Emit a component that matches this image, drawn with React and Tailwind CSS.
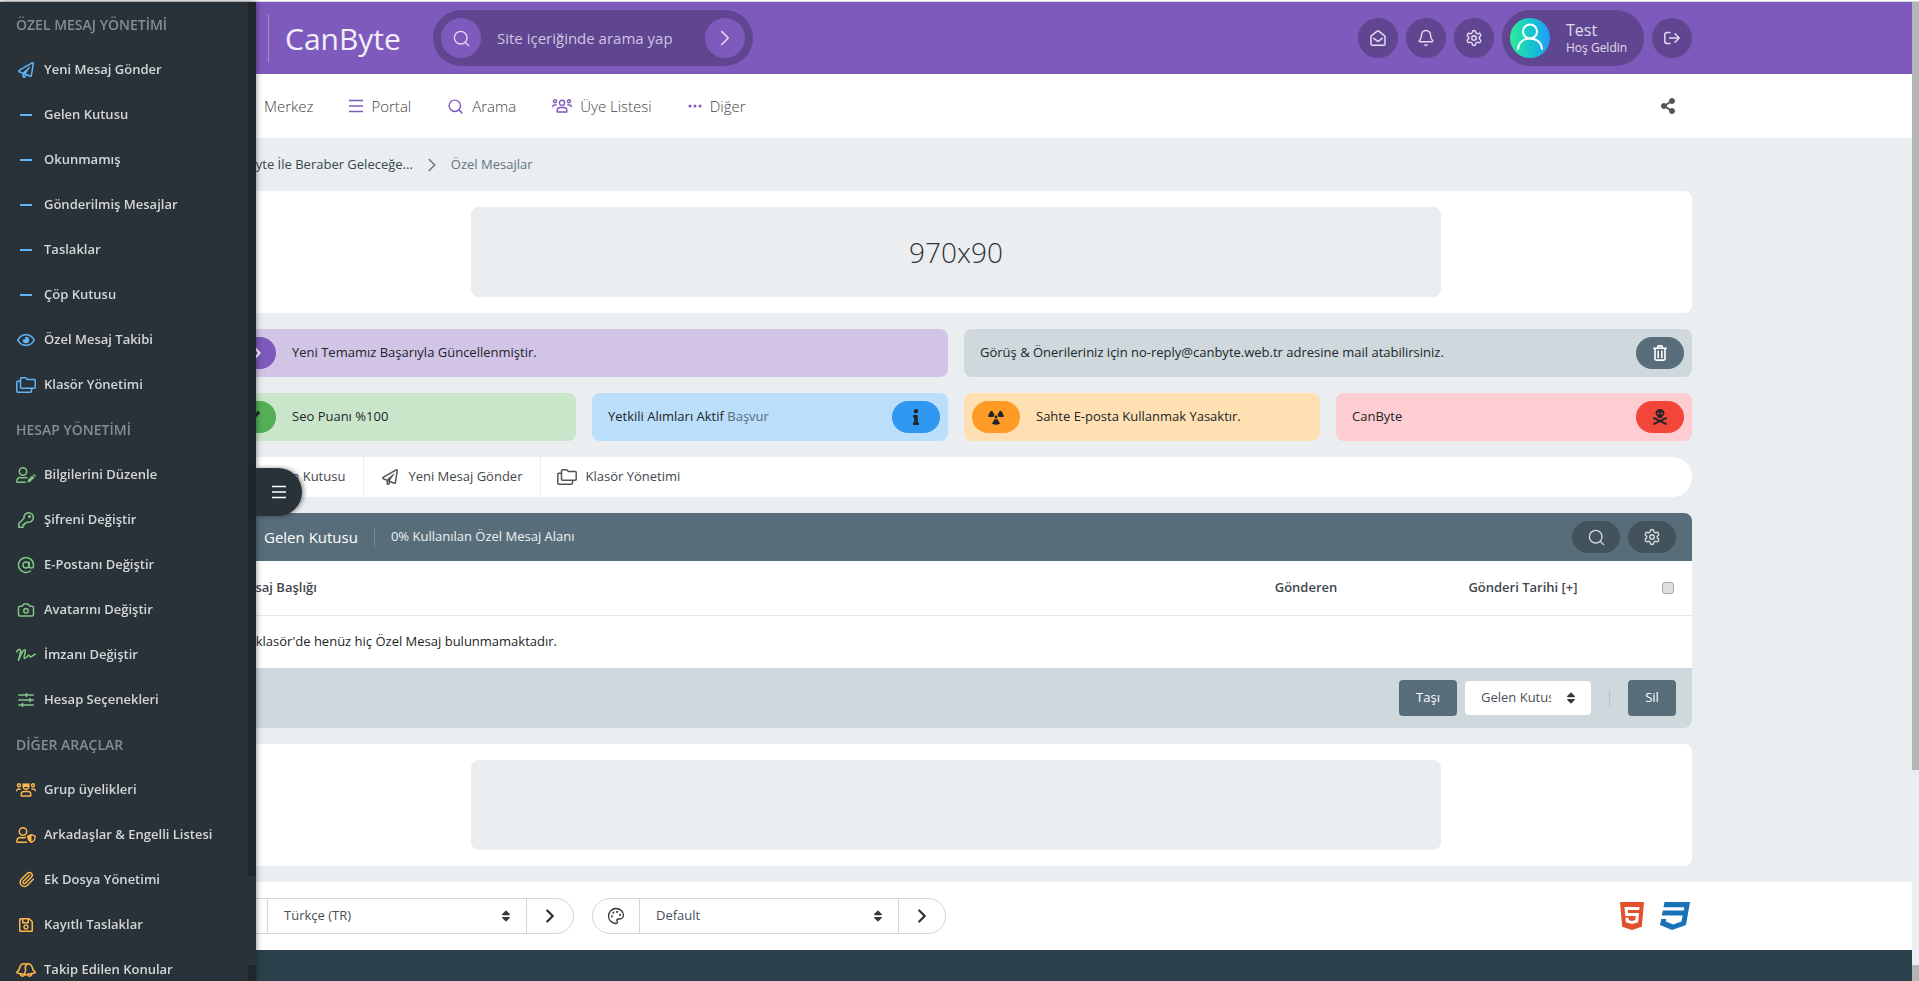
import { AtSign, Bell, Camera, ChevronRight, Palette, Paperclip, Search, Settings } from "lucide-react";
import {
  FaCheck,
  FaCss3,
  FaHtml5,
  FaInfo,
  FaRadiation,
  FaRegPaperPlane,
  FaRegSave,
  FaShareAlt,
  FaSkullCrossbones,
  FaSort,
} from "react-icons/fa";

function Svg({ children, className = "", viewBox = "0 0 20 16", strokeWidth = 1.5 }) {
  return (
    <svg
      className={className}
      viewBox={viewBox}
      fill="none"
      stroke="currentColor"
      strokeWidth={strokeWidth}
      strokeLinecap="round"
      strokeLinejoin="round"
      aria-hidden="true"
    >
      {children}
    </svg>
  );
}

const Dash = () => <span className="block h-[2px] w-3 bg-current" />;

const Bars = () => (
  <svg className="h-4 w-[14px]" viewBox="0 0 14 16" fill="none" stroke="currentColor" strokeWidth="1.6" aria-hidden="true">
    <path d="M0 2.500h14M0 8h14M0 13.500h14" />
  </svg>
);

const Eye = () => (
  <Svg className="h-4 w-5" strokeWidth={1.600}>
    <path d="M1.800 8C3.500 4.600 6.500 2.700 10 2.700S16.500 4.600 18.200 8c-1.700 3.400-4.700 5.300-8.200 5.300S3.500 11.400 1.800 8z" />
    <path d="M10 4.800a3.200 3.200 0 1 1-3.100 2.400c.9.700 2.400.2 2.400-1.200 0-.5 0-.9.7-1.200z" fill="currentColor" stroke="none" />
  </Svg>
);

const Folders = () => (
  <Svg className="h-4 w-5">
    <path d="M5.500 .8h4.200l1.800 1.800h6.700a1 1 0 0 1 1 1v6.600a1 1 0 0 1-1 1H5.500a1 1 0 0 1-1-1V1.800a1 1 0 0 1 1-1z" />
    <path d="M4.500 4.300H1.800a1 1 0 0 0-1 1v8.900a1 1 0 0 0 1 1h12.700a1 1 0 0 0 1-1v-2.500" />
  </Svg>
);

const UserPen = () => (
  <Svg className="h-4 w-5">
    <circle cx="7" cy="4.500" r="3.700" />
    <path d="M9.500 15.200H1.600a.8.8 0 0 1-.8-.8c0-2.500 1.600-4 3.900-4 1.500.6 3.100.6 4.600 0l1.700.4" />
    <path d="M11.500 15.500l.4-2.600 4.300-4.300 2.100 2.100-4.300 4.300z" fill="currentColor" stroke="none" />
    <path d="M17 7.800l.9-.9 2.100 2.100-.9.9z" fill="currentColor" stroke="none" />
  </Svg>
);

const UserShield = () => (
  <Svg className="h-4 w-5">
    <circle cx="7" cy="4.500" r="3.700" />
    <path d="M10.500 15.200H1.600a.8.8 0 0 1-.8-.8c0-2.500 1.600-4 3.900-4 1.500.6 3.100.6 4.600 0" />
    <path d="M15.500 7.700l3.800 1.400c0 2.700-1.200 5.100-3.800 6.300-2.600-1.200-3.800-3.600-3.800-6.300z" strokeWidth="1.300" />
    <path d="M15.500 7.700v7.700c-2.600-1.200-3.800-3.600-3.800-6.300z" fill="currentColor" stroke="none" />
  </Svg>
);

const Key = () => (
  <Svg className="size-4" viewBox="0 0 16 16">
    <path d="M10.500.8a4.700 4.700 0 1 1-1.200 9.200L8 11.300H6.500v1.500H5v2.400H.8v-3.700L6 6.300A4.700 4.700 0 0 1 10.500.8z" />
    <circle cx="11.500" cy="4.500" r=".8" fill="currentColor" />
  </Svg>
);

const Signature = () => (
  <Svg className="h-4 w-5" strokeWidth={1.600}>
    <path d="M.9 4.800C1.300 3.200 2.600 2.200 3.800 2.500c1.800.5.300 4.500-1.300 10.700C4.500 8 6.800 2.200 9 2.900c1.700.7-2.200 7.300-.5 8.300 1.500.8 3-3.200 4.500-3 1 .2.300 2 1.700 1.700 1.300-.4 2.600-2.100 4.500-2.700" />
  </Svg>
);

const Sliders = () => (
  <Svg className="size-4" viewBox="0 0 16 16" strokeWidth={1.600}>
    <path d="M.8 3h14.400M.8 8h14.400M.8 13h14.400M8.500 1.500v3M12 6.500v3M4.500 11.500v3" />
  </Svg>
);

const Users = () => (
  <Svg className="h-4 w-5" strokeWidth={1.400}>
    <circle cx="10" cy="4.800" r="2.600" />
    <circle cx="3" cy="3.300" r="1.500" />
    <circle cx="17" cy="3.300" r="1.500" />
    <path d="M5.200 14V12.500c0-1.900 1.200-3 2.800-3h4c1.600 0 2.800 1.100 2.800 3V14zM.7 8.700c.1-1 .9-1.700 2-1.700h1.500M19.300 8.700c-.1-1-.9-1.700-2-1.700h-1.500" />
  </Svg>
);

const UsersCrown = () => (
  <Svg className="h-4 w-5" strokeWidth={1.400}>
    <path d="M7.200 4.500a2.800 2.800 0 1 0 5.600 0" />
    <path d="M6.500 1l1.800.7L10 1l1.700.7L13.500 1v4h-7z" fill="currentColor" stroke="none" />
    <circle cx="3" cy="3.300" r="1.500" />
    <circle cx="17" cy="3.300" r="1.500" />
    <path d="M5.200 14V12.500c0-1.900 1.200-3 2.800-3h4c1.600 0 2.800 1.100 2.800 3V14zM.7 8.700c.1-1 .9-1.700 2-1.700h1.500M19.300 8.700c-.1-1-.9-1.700-2-1.700h-1.500" />
  </Svg>
);

const Bells = () => (
  <Svg className="h-4 w-5">
    <path d="M9.500 12.700L1.200 10.900c-.5-.5-.5-.9 0-1.300C2.600 8.700 3.300 7.600 3.600 6c.6-3 2.300-4.500 5-4.300 1 .1 1.700.4 2.300.9M4.300 12.300c.3 2 2.800 2.600 3.800.8" />
    <path d="M10.900 2.600c-1.700 1-2 2.300-1.500 4.200.5 1.900.3 3.200-.8 4.500-.4.700 0 1.400.9 1.400l9.300-1.800c.5-.4.500-.8 0-1.300-1.400-.9-2.100-2-2.400-3.600-.6-3-2.300-4.500-5-4.300M11.900 13.100c1 1.800 3.500 1.200 3.800-.8" />
  </Svg>
);

const MailOpen = () => (
  <Svg className="size-4" viewBox="0 0 16 16">
    <path d="M1 6.100L7.200 1.100a1.300 1.300 0 0 1 1.600 0L15 6.100v7.800a1.300 1.300 0 0 1-1.300 1.300H2.300A1.300 1.300 0 0 1 1 13.900z" />
    <path d="M3.800 8.300l3.300 2.600a1.400 1.400 0 0 0 1.800 0l3.300-2.600" />
  </Svg>
);

const SignOut = () => (
  <Svg className="size-4" viewBox="0 0 16 16">
    <path d="M6 2.500H3A2.200 2.200 0 0 0 .8 4.700v6.600A2.200 2.200 0 0 0 3 13.500h3M5.500 8h9.500M11 3.800L15.200 8 11 12.200" />
  </Svg>
);

const Trash = () => (
  <Svg className="size-4" viewBox="0 0 16 16" strokeWidth={1.600}>
    <path d="M1.800 3.200h12.400M5.300 3L6.200.9h3.600l.9 2.100M3 3.500v10.300c0 .8.500 1.300 1.300 1.300h7.400c.8 0 1.300-.5 1.300-1.300V3.500M6.200 6v6.500M9.800 6v6.500" />
  </Svg>
);

const sections = [
  {
    title: "ÖZEL MESAJ YÖNETİMİ",
    color: "text-[#64b5f6]",
    items: [
      { label: "Yeni Mesaj Gönder", icon: <FaRegPaperPlane size={16} /> },
      { label: "Gelen Kutusu", icon: <Dash /> },
      { label: "Okunmamış", icon: <Dash /> },
      { label: "Gönderilmiş Mesajlar", icon: <Dash /> },
      { label: "Taslaklar", icon: <Dash /> },
      { label: "Çöp Kutusu", icon: <Dash /> },
      { label: "Özel Mesaj Takibi", icon: <Eye /> },
      { label: "Klasör Yönetimi", icon: <Folders /> },
    ],
  },
  {
    title: "HESAP YÖNETİMİ",
    color: "text-[#81c784]",
    items: [
      { label: "Bilgilerini Düzenle", icon: <UserPen /> },
      { label: "Şifreni Değiştir", icon: <Key /> },
      { label: "E-Postanı Değiştir", icon: <AtSign size={18} /> },
      { label: "Avatarını Değiştir", icon: <Camera size={18} /> },
      { label: "İmzanı Değiştir", icon: <Signature /> },
      { label: "Hesap Seçenekleri", icon: <Sliders /> },
    ],
  },
  {
    title: "DİĞER ARAÇLAR",
    color: "text-[#ffb74d]",
    items: [
      { label: "Grup üyelikleri", icon: <UsersCrown /> },
      { label: "Arkadaşlar & Engelli Listesi", icon: <UserShield /> },
      { label: "Ek Dosya Yönetimi", icon: <Paperclip size={17} /> },
      { label: "Kayıtlı Taslaklar", icon: <FaRegSave size={16} /> },
      { label: "Takip Edilen Konular", icon: <Bells /> },
    ],
  },
];

const navLinks = [
  { label: "Merkez", icon: <span className="w-5" /> },
  { label: "Portal", icon: <Bars /> },
  { label: "Arama", icon: <Search size={17} strokeWidth={2} /> },
  { label: "Üye Listesi", icon: <Users /> },
  {
    label: "Diğer",
    icon: (
      <svg className="h-4 w-[14px]" viewBox="0 0 14 16" fill="currentColor" aria-hidden="true">
        <circle cx="2" cy="8" r="1.500" />
        <circle cx="7" cy="8" r="1.500" />
        <circle cx="12" cy="8" r="1.500" />
      </svg>
    ),
  },
];

const container = "mx-auto w-full max-w-[1472px]";

function Sidebar() {
  return (
    <aside className="fixed top-[2px] bottom-0 left-0 z-20 flex w-64 bg-[#283238] shadow-[0_0_6px_rgba(0,0,0,0.5)]">
      <div className="flex-1 overflow-hidden">
        {sections.map((section) => (
          <nav key={section.title} aria-label={section.title}>
            <h2 className="flex h-[45px] items-center px-4 text-sm font-semibold text-[#868c90]">{section.title}</h2>
            {section.items.map((item) => (
              <a key={item.label} href="#" className="flex h-[45px] items-center gap-2 px-4">
                <span className={`flex w-5 shrink-0 justify-center ${section.color}`}>{item.icon}</span>
                <span className="text-[13px] font-semibold whitespace-nowrap text-[#d4d6d7]">{item.label}</span>
              </a>
            ))}
          </nav>
        ))}
      </div>
      <div className="flex w-2 flex-col justify-between">
        <span className="h-[874px] bg-[#1f262c]" />
        <span className="h-4 bg-[#1f262c]" />
      </div>
      <button
        type="button"
        aria-label="Menü"
        className="absolute top-[466px] left-full flex h-12 w-[46px] items-center justify-center rounded-r-full bg-[#283238] text-white shadow-[2px_0_4px_rgba(0,0,0,0.4)]"
      >
        <Bars />
      </button>
    </aside>
  );
}

function RoundButton({ label, children }) {
  return (
    <button
      type="button"
      aria-label={label}
      className="flex size-10 items-center justify-center rounded-full bg-[#604690] text-[#e4dbf2]"
    >
      {children}
    </button>
  );
}

function TopBar() {
  return (
    <header className="bg-[#7e5abc]">
      <div className={`${container} flex h-[72px] items-center pl-12`}>
        <span className="h-12 w-px bg-white/30" />
        <a href="#" className="w-[164px] pl-4 text-[30px] text-white/90">
          CanByte
        </a>
        <form className="flex h-14 w-80 items-center rounded-full bg-[#604690] p-2">
          <span className="flex size-10 shrink-0 items-center justify-center rounded-full bg-[#7e5abc] text-[#e4dbf2]">
            <Search size={19} strokeWidth={1.700} />
          </span>
          <input
            type="text"
            aria-label="Site içeriğinde arama yap"
            placeholder="Site içeriğinde arama yap"
            className="min-w-0 flex-1 bg-transparent px-4 text-[15px] outline-none placeholder:text-[#cfc4e2]"
          />
          <button
            type="button"
            aria-label="Ara"
            className="flex size-10 shrink-0 items-center justify-center rounded-full bg-[#7e5abc] text-[#e4dbf2]"
          >
            <ChevronRight size={26} strokeWidth={1.500} />
          </button>
        </form>
        <div className="ml-auto flex items-center gap-2">
          <RoundButton label="Özel Mesajlar">
            <MailOpen />
          </RoundButton>
          <RoundButton label="Bildirimler">
            <Bell size={18} strokeWidth={1.900} />
          </RoundButton>
          <RoundButton label="Ayarlar">
            <Settings size={18} strokeWidth={1.900} />
          </RoundButton>
          <a href="#" className="flex h-14 w-[142px] items-center gap-4 rounded-full bg-[#604690] px-2">
            <span className="flex size-10 items-center justify-center rounded-full bg-gradient-to-r from-[#2fec92] to-[#249cf8] text-white">
              <Svg className="size-10" viewBox="0 0 40 40" strokeWidth={2}>
                <circle cx="20" cy="13.500" r="7" />
                <path d="M8 31c.5-6.500 5.500-10.500 12-10.500S31.500 24.500 32 31" />
              </Svg>
            </span>
            <span className="flex flex-col text-white/80">
              <span className="text-base leading-5">Test</span>
              <span className="text-xs leading-4 whitespace-nowrap">Hoş Geldin</span>
            </span>
          </a>
          <RoundButton label="Çıkış">
            <SignOut />
          </RoundButton>
        </div>
      </div>
    </header>
  );
}

function NavBar() {
  return (
    <nav className="bg-white">
      <div className={`${container} flex h-16 items-center gap-9 px-4`}>
        {navLinks.map((link) => (
          <a key={link.label} href="#" className="flex items-center gap-2 text-[15px] font-light text-[#444]">
            <span className="flex text-[#7e5abc]">{link.icon}</span>
            {link.label}
          </a>
        ))}
        <button type="button" aria-label="Paylaş" className="ml-auto text-[#555]">
          <FaShareAlt size={16} />
        </button>
      </div>
    </nav>
  );
}

function Banner({ children }) {
  return (
    <div className="rounded-lg bg-white p-4">
      <div className="mx-auto flex h-[90px] max-w-[970px] items-center justify-center rounded-lg bg-[#eaeef1] text-[28px] font-light text-[#333]">
        {children}
      </div>
    </div>
  );
}

function Notice({ icon, iconClass, className, iconRight, children }) {
  return (
    <div className={`flex h-12 items-center gap-4 rounded-lg px-2 text-[13px] text-[#212529] ${className}`}>
      <span
        className={`flex h-8 w-12 shrink-0 items-center justify-center rounded-full ${iconClass} ${iconRight ? "order-2" : ""}`}
      >
        {icon}
      </span>
      <p className={`flex-1 whitespace-nowrap ${iconRight ? "pl-2" : ""}`}>{children}</p>
    </div>
  );
}

function Notices() {
  return (
    <div className="grid grid-cols-4 gap-4">
      <Notice className="col-span-2 bg-[#d1c4e7]" iconClass="bg-[#7e5abc] text-white" icon={<FaCode />}>
        Yeni Temamız Başarıyla Güncellenmiştir.
      </Notice>
      <Notice className="col-span-2 bg-[#cfd8dd]" iconClass="bg-[#576e7a] text-white" icon={<Trash />} iconRight>
        Görüş &amp; Önerileriniz için no-reply@canbyte.web.tr adresine mail atabilirsiniz.
      </Notice>
      <Notice className="bg-[#c9e6cb]" iconClass="bg-[#53ae57]" icon={<FaCheck size={16} />}>
        Seo Puanı %100
      </Notice>
      <Notice className="bg-[#bbdefa]" iconClass="bg-[#2f97ef]" icon={<FaInfo size={16} />} iconRight>
        Yetkili Alımları Aktif{" "}
        <a href="#" className="text-[#576e7a]">
          Başvur
        </a>
      </Notice>
      <Notice className="bg-[#fee0b2]" iconClass="bg-[#fe9a25]" icon={<FaRadiation size={16} />}>
        Sahte E-posta Kullanmak Yasaktır.
      </Notice>
      <Notice className="bg-[#fecdd2]" iconClass="bg-[#f2463a]" icon={<FaSkullCrossbones size={16} />} iconRight>
        CanByte
      </Notice>
    </div>
  );
}

function FaCode() {
  return (
    <Svg className="h-4 w-5" strokeWidth={2}>
      <path d="M5 4L1.500 8 5 12M14 4l3.500 4-3.500 4" />
    </Svg>
  );
}

function Tabs() {
  const tab = "flex items-center gap-2 pr-[18px] pl-4 text-[13px] text-[#3f474d]";
  return (
    <div className="flex h-10 divide-x divide-[#eaeef1] overflow-hidden rounded-full bg-white">
      <a href="#" className={tab}>
        <span className="w-5" />
        Gelen Kutusu
      </a>
      <a href="#" className={tab}>
        <span className="flex w-5 justify-center text-[#555]">
          <FaRegPaperPlane size={16} />
        </span>
        Yeni Mesaj Gönder
      </a>
      <a href="#" className={tab}>
        <span className="text-[#555]">
          <Folders />
        </span>
        Klasör Yönetimi
      </a>
    </div>
  );
}

function Inbox() {
  const headButton = "flex h-8 w-12 items-center justify-center rounded-full bg-[#43535b] text-[#d5dbde]";
  return (
    <section className="overflow-hidden rounded-lg bg-white">
      <div className="flex h-12 items-center bg-[#576e7a] px-4 text-white">
        <h1 className="pl-7 text-[15px] font-medium">Gelen Kutusu</h1>
        <span className="mx-4 h-5 w-px bg-white/20" />
        <span className="text-[13px] text-white/90">0% Kullanılan Özel Mesaj Alanı</span>
        <div className="ml-auto flex gap-2">
          <button type="button" aria-label="Mesajlarda ara" className={headButton}>
            <Search size={19} strokeWidth={1.700} />
          </button>
          <button type="button" aria-label="Mesaj ayarları" className={headButton}>
            <Settings size={18} strokeWidth={1.900} />
          </button>
        </div>
      </div>
      <table className="w-full table-fixed text-[13px] text-[#212529]">
        <thead>
          <tr className="h-[54px] border-b border-[#e6eaed] text-[#3f474d]">
            <th className="pl-4 text-left font-semibold">Mesaj Başlığı</th>
            <th className="w-[216px] text-center font-semibold">Gönderen</th>
            <th className="w-[218px] text-center font-semibold">Gönderi Tarihi [+]</th>
            <th className="w-[60px] pr-[18px]">
              <input
                type="checkbox"
                aria-label="Tümünü seç"
                className="ml-auto block size-3 appearance-none rounded-[3px] border border-[#aaa] bg-[#dedede]"
              />
            </th>
          </tr>
        </thead>
        <tbody>
          <tr className="h-[53px]">
            <td colSpan={4} className="pl-4">
              Bu klasör'de henüz hiç Özel Mesaj bulunmamaktadır.
            </td>
          </tr>
        </tbody>
      </table>
      <div className="flex h-[60px] items-center justify-end bg-[#cfd8dd] px-4 text-[13px]">
        <button type="button" className="h-9 w-[58px] rounded bg-[#576e7a] text-white">
          Taşı
        </button>
        <div className="relative ml-2">
          <select aria-label="Klasör" className="h-[34px] w-[126px] appearance-none rounded bg-white pr-10 pl-4 text-[#495057]">
            <option>Gelen Kutusu</option>
          </select>
          <FaSort size={14} className="pointer-events-none absolute top-[10px] right-[13px] text-[#343a40]" />
        </div>
        <span className="mx-[18px] h-4 w-px bg-[#b0c4cb]" />
        <button type="button" className="h-9 w-12 rounded bg-[#576e7a] text-white">
          Sil
        </button>
      </div>
    </section>
  );
}

function Picker({ label, value, icon }) {
  return (
    <form className="flex h-9 w-[354px] divide-x divide-[#cfd8dd] overflow-hidden rounded-full border border-[#cfd8dd] text-[13px] text-[#495057]">
      <span className="flex w-[47px] items-center justify-center text-[#333]">{icon}</span>
      <div className="relative flex-1">
        <select aria-label={label} className="h-full w-full appearance-none bg-white pr-10 pl-4">
          <option>{value}</option>
        </select>
        <FaSort size={14} className="pointer-events-none absolute top-[10px] right-[13px] text-[#343a40]" />
      </div>
      <button type="button" aria-label={`${label} uygula`} className="flex w-[46px] items-center justify-center text-[#333]">
        <ChevronRight size={22} strokeWidth={2.500} />
      </button>
    </form>
  );
}

export default function App() {
  return (
    <div className="flex h-screen flex-col overflow-hidden bg-[#eaeef1] font-['Open_Sans','Noto_Sans',sans-serif]">
      <div className="h-[2px] shrink-0 border-b border-[#d9dbde] bg-white" />
      <div className="flex min-h-0 flex-1">
        <div className="flex min-w-0 flex-1 flex-col overflow-hidden">
          <TopBar />
          <NavBar />
          <main className={`${container} flex flex-col gap-4 pb-4`}>
            <nav aria-label="Sayfa yolu" className="-mb-4 flex h-[53px] items-center gap-2 pl-1 text-[13px] text-[#37474f]">
              <a href="#">CanByte İle Beraber Geleceğe...</a>
              <ChevronRight size={22} strokeWidth={1.700} className="text-[#777]" />
              <span className="text-[#5f747f]">Özel Mesajlar</span>
            </nav>
            <Banner>970x90</Banner>
            <Notices />
            <Tabs />
            <Inbox />
            <Banner />
          </main>
          <div className="bg-white">
            <div className={`${container} flex h-[68px] items-center gap-[18px]`}>
              <Picker label="Dil" value="Türkçe (TR)" />
              <Picker label="Tema" value="Default" icon={<Palette size={18} strokeWidth={1.700} />} />
              <div className="ml-auto flex items-center gap-3">
                <FaHtml5 size={32} className="text-[#e1502a]" aria-label="HTML5" />
                <FaCss3 size={32} className="text-[#1872b8]" aria-label="CSS3" />
              </div>
            </div>
          </div>
          <footer className="flex-1 bg-[#2b424c]" />
        </div>
        <div className="flex w-[7px] flex-col justify-between">
          <span className="h-[768px] bg-[#b3b5b7]" />
          <span className="h-4 bg-[#b3b5b7]" />
        </div>
      </div>
      <Sidebar />
    </div>
  );
}
